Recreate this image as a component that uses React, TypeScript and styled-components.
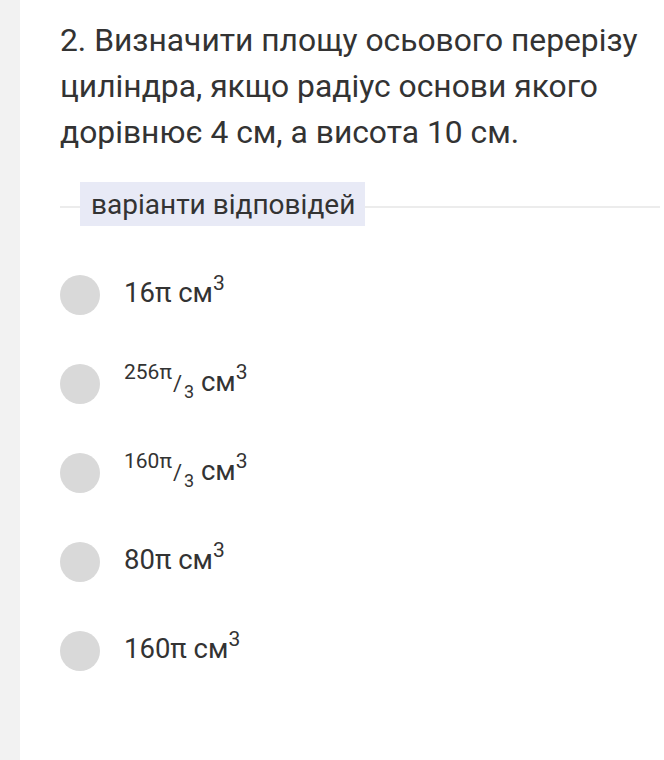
import React from "react"
import styled, { createGlobalStyle } from "styled-components"

const GlobalStyle = createGlobalStyle`
  html, body {
    margin: 0;
    padding: 0;
    background: #f2f2f2;
  }
  body {
    font-family: Roboto, "Noto Sans", "Liberation Sans", sans-serif;
    color: #333333;
  }
`

const Page = styled.div`
  display: flex;
  min-height: 760px;
`

const SideStrip = styled.div`
  width: 20px;
  flex-shrink: 0;
  background: #f2f2f2;
`

const Card = styled.div`
  flex: 1;
  background: #ffffff;
  padding: 17px 4px 40px 40px;
`

const Question = styled.div`
  font-size: 31.8px;
  line-height: 46px;
  color: #333333;
  margin: 0;
`

const Divider = styled.div`
  display: flex;
  align-items: center;
  margin-top: 27px;

  &::before,
  &::after {
    content: "";
    height: 2px;
    margin-top: 6px;
    background: #ececec;
  }

  &::before {
    width: 20px;
  }

  &::after {
    flex: 1;
  }
`

const Label = styled.div`
  background: #e8eaf6;
  height: 44px;
  padding: 0 10px 0 11px;
  display: flex;
  align-items: center;
  font-size: 28px;
  color: #333333;
`

const OptionList = styled.div`
  display: flex;
  flex-direction: column;
  margin-top: 24px;
`

const Option = styled.div`
  display: flex;
  align-items: center;
  height: 89px;
  gap: 24px;
`

const Radio = styled.div`
  width: 40px;
  height: 40px;
  border-radius: 50%;
  background: #d9d9d9;
  flex-shrink: 0;
`

const OptionText = styled.div`
  font-size: 27.5px;
  color: #333333;
  margin-top: -4px;
`

const Sup = styled.sup`
  font-size: 21px;
  vertical-align: 12px;
  line-height: 0;
`

const Sub = styled.sub`
  font-size: 18px;
  vertical-align: -7px;
  line-height: 0;
`

const Slash = styled.span`
  font-size: 22px;
  margin: 0 2px 0 1px;
`

const Cube = () => <Sup>3</Sup>

const Fraction = ({ num, den }: { num: string; den: string }) => (
  <>
    <Sup>{num}</Sup>
    <Slash>/</Slash>
    <Sub>{den}</Sub>
  </>
)

const App = () => {
  return (
    <>
      <GlobalStyle />
      <Page>
        <SideStrip />
        <Card>
          <Question>
            2. Визначити площу осьового перерізу циліндра, якщо радіус основи
            якого дорівнює 4 см, а висота 10 см.
          </Question>
          <Divider>
            <Label>варіанти відповідей</Label>
          </Divider>
          <OptionList>
            <Option>
              <Radio />
              <OptionText>
                16π см<Cube />
              </OptionText>
            </Option>
            <Option>
              <Radio />
              <OptionText>
                <Fraction num="256π" den="3" /> см<Cube />
              </OptionText>
            </Option>
            <Option>
              <Radio />
              <OptionText>
                <Fraction num="160π" den="3" /> см<Cube />
              </OptionText>
            </Option>
            <Option>
              <Radio />
              <OptionText>
                80π см<Cube />
              </OptionText>
            </Option>
            <Option>
              <Radio />
              <OptionText>
                160π см<Cube />
              </OptionText>
            </Option>
          </OptionList>
        </Card>
      </Page>
    </>
  )
}

export default App
